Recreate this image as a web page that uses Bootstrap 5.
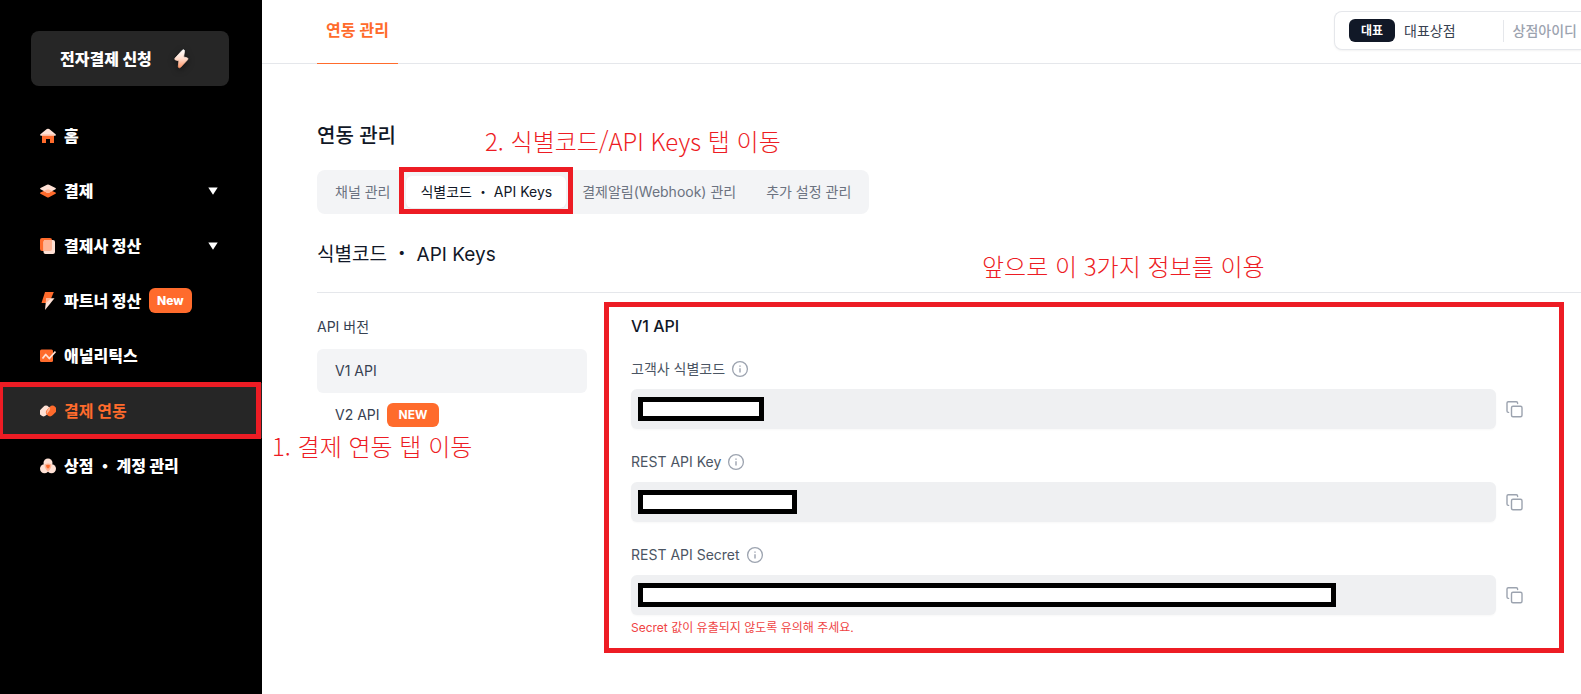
<!DOCTYPE html>
<html lang="ko">
<head>
<meta charset="utf-8">
<meta name="viewport" content="width=device-width, initial-scale=1">
<title>연동 관리</title>
<link href="https://cdn.jsdelivr.net/npm/bootstrap@5.3.0/dist/css/bootstrap.min.css" rel="stylesheet">
<style>
  :root { --brand: #ff6b2c; --ink: #111827; --note: #ed1c24; }
  body { font-family: Inter, "Noto Sans CJK KR", sans-serif; font-size: 14px; line-height: 20px; color: var(--ink); background: #fff; }
  a { text-decoration: none; }
  svg { display: block; flex-shrink: 0; }

  .side { width: 262px; background: #000; z-index: 2; }
  .apply-btn { height: 55px; margin: 31px 33px 22px 31px; padding: 0 38px 0 29px; background: #262626; color: #fff; border: 0; border-radius: 8px; font-size: 16px; font-weight: 800; }
  .side-link { height: 55px; padding: 0 44px 0 40px; gap: 8px; color: #fff; font-size: 16px; font-weight: 800; white-space: nowrap; }
  .side-link.current { background: #262626; color: var(--brand); font-weight: 700; }
  .new-tag { background: var(--brand); color: #fff; border-radius: 6px; font-size: 12px; font-weight: 800; height: 25px; padding: 0 8px; }

  .topbar { height: 64px; border-bottom: 1px solid #e5e7eb; }
  .top-tab { margin-left: 55px; padding: 0 9px 4px; height: 64px; color: var(--brand); font-size: 16px; font-weight: 600; border-bottom: 1px solid var(--brand); }
  .store { width: 247px; height: 39px; margin-top: 11px; padding: 0 0 0 14px; gap: 9px; background: #fff; border: 1px solid #e5e7eb; border-right: 0; border-radius: 8px 0 0 8px; box-shadow: 0 1px 2px #0000000d; white-space: nowrap; color: #374151; }
  .store-tag { width: 46px; height: 23px; background: var(--ink); color: #fff; border-radius: 6px; font-size: 12px; font-weight: 700; }
  .store-id { height: 22px; margin-left: auto; padding: 0 4px 0 9px; border-left: 1px solid #e5e7eb; color: #9ca3af; font-weight: 500; }

  .page-body { padding: 57px 0 0 55px; }
  .page-title { font-size: 20px; line-height: 30px; font-weight: 500; margin-bottom: 19px; }
  .tab-strip { height: 44px; padding: 4px; gap: 2px; border-radius: 8px; background: #f3f4f6; white-space: nowrap; }
  .tab-strip a { height: 32px; padding: 0 14px; color: #6b7280; border-radius: 6px; }
  .tab-strip a.current { background: #fff; color: var(--ink); box-shadow: 0 1px 2px #0000000d; }
  .section-title { font-size: 19px; line-height: 28px; font-weight: 400; padding: 27px 0 23px; margin: 0; border-bottom: 1px solid #e5e7eb; }

  .versions { width: 270px; padding-top: 24px; color: #374151; }
  .versions h3 { font-size: 14px; line-height: 20px; font-weight: 400; margin-bottom: 12px; }
  .versions a { height: 44px; padding: 0 18px; gap: 7px; color: #374151; border-radius: 6px; }
  .versions a.current { background: #f3f4f6; }
  .versions .new-tag { height: 24px; padding: 0 12px; font-weight: 700; }

  .keys { margin: 9px 17px 0 17px; padding: 9px 35px 10px 22px; border: 5px solid var(--note); }
  .keys h3 { font-size: 16px; line-height: 20px; font-weight: 500; margin-bottom: 23px; }
  .key-label { height: 20px; gap: 6px; color: #4b5563; margin-bottom: 10px; }
  .key-row { gap: 8px; margin-bottom: 23px; }
  .key-row.last { margin-bottom: 3px; }
  .key-input { height: 40px; background: #eff0f2; border: 0; border-radius: 6px; box-shadow: 0 1px 2px #00000008; }
  .copy-btn { width: 20px; height: 20px; padding: 0; border: 0; background: none; color: #9ca3af; }
  .warn { font-size: 12px; line-height: 20px; color: #ef4444; margin: 0; }

  .mask { position: absolute; left: 7px; top: 8px; height: 24px; background: #fff; border: 5px solid #000; }
  .frame { position: absolute; border: 5px solid var(--note); pointer-events: none; }
  .frame-side { inset: -1px 1px -1px -2px; }
  .frame-tab { inset: -9px -7px -6px; }
  .callout-text { position: absolute; font-family: "Noto Sans CJK KR", sans-serif; font-size: 24px; line-height: 28px; font-weight: 300; color: var(--note); white-space: nowrap; pointer-events: none; }
  .step-one { left: 272px; top: 49px; }
  .step-two { left: 168px; top: 6px; }
  .step-three { left: 665px; top: 38px; }
</style>
</head>
<body>
<svg width="0" height="0" class="position-absolute" aria-hidden="true">
  <defs>
    <symbol id="i-info" viewBox="0 0 18 18"><g fill="none" stroke="#9ca3af"><circle cx="9" cy="9" r="7.4" stroke-width="1.3"/><path d="M9 8.2v4.2" stroke-width="1.4"/><path d="M9 5.4v1.3" stroke-width="1.4"/></g></symbol>
    <symbol id="i-copy" viewBox="0 0 20 20"><g fill="none" stroke="currentColor" stroke-width="1.4" stroke-linejoin="round" stroke-linecap="round"><rect x="7.5" y="7.2" width="10.500" height="10.500" rx="1.5"/><path d="M4.600 13.400H4.300a1.300 1.300 0 0 1-1.300-1.300V4.100a1.300 1.300 0 0 1 1.300-1.300h8a1.300 1.300 0 0 1 1.300 1.300v.4"/></g></symbol>
    <linearGradient id="bolt-fill" x1="0" y1="0" x2="0" y2="1"><stop offset="0" stop-color="#fff"/><stop offset=".5" stop-color="#ffdccc"/><stop offset="1" stop-color="#ff9466"/></linearGradient>
  </defs>
</svg>
<div class="d-flex min-vh-100">
  <aside class="side flex-shrink-0 d-flex flex-column position-relative">
    <button type="button" class="apply-btn d-flex align-items-center justify-content-between">전자결제 신청
      <svg width="20" height="24" viewBox="0 0 20 24" style="filter:drop-shadow(0 2px 3px #0008)"><path fill="url(#bolt-fill)" stroke="url(#bolt-fill)" stroke-width=".8" d="M11.3 3.3 4.2 11c-.8.9-.5 1.7.5 2l3.2.8-.6 5.5c-.1 1.6 1.300 2 2.500.8l6.600-7.200c.9-1 .6-1.800-.5-2.100l-3.300-.9.9-5.600c.2-1.700-1.200-2-2.200-1z"/></svg>
    </button>
    <nav class="nav flex-column flex-nowrap">
      <a href="#" class="side-link d-flex align-items-center">
        <svg width="16" height="16" viewBox="0 0 16 16"><path fill="#ff6b2c" d="M2 7h12v8h-4v-4H6v4H2z"/><path fill="#ffe1d5" d="M6.800 1.100 Q8 .2 9.200 1.100L15.600 6.300q.8 1.200-.6 1.500H1Q-.3 7.500.4 6.300z"/><path fill="#ffb596" d="M2 6.500h12v1.300H2z"/></svg>홈</a>
      <a href="#" class="side-link d-flex align-items-center">
        <svg width="16" height="16" viewBox="0 0 16 16"><path fill="#ff6b2c" d="m.5 9.600 6.500-3q1-.4 2 0l6.500 3q.8.600 0 1.200L9 14.200q-1 .5-2 0L.5 10.800q-.8-.6 0-1.200z"/><path fill="#ffe1d5" d="M.5 5 7 1.700q1-.4 2 0L15.500 5q.8.600 0 1.200L9 9.700q-1 .5-2 0L.5 6.200q-.8-.6 0-1.200z"/><path fill="#ffb596" d="m3.800 8 3.200-1.400q1-.4 2 0L12.200 8 9 9.700q-1 .5-2 0z"/></svg>결제
        <svg class="ms-auto" width="10" height="8" viewBox="0 0 10 8"><path fill="#fff" d="M.3.500h9.400L5 7.800z"/></svg></a>
      <a href="#" class="side-link d-flex align-items-center">
        <svg width="16" height="16" viewBox="0 0 16 16"><rect width="12" height="13" rx="2" fill="#ff6b2c"/><rect x="3.500" y="2" width="11.500" height="14" rx="2" fill="#ffe1d5"/><path fill="#ffb596" d="M5.500 2H12v9q0 2-2 2H3.500V4q0-2 2-2z"/></svg>결제사 정산
        <svg class="ms-auto" width="10" height="8" viewBox="0 0 10 8"><path fill="#fff" d="M.3.500h9.400L5 7.800z"/></svg></a>
      <a href="#" class="side-link d-flex align-items-center">
        <svg width="16" height="18" viewBox="0 0 16 18"><path fill="#ff6b2c" d="M5 0h8.800l-2.600 6.300L6 11H1.500z"/><path fill="#ffe1d5" d="M6.200 6.300h8.300L5 18z"/><path fill="#ffb596" d="M6.200 6.300h5L6 11z"/></svg>파트너 정산<span class="new-tag d-flex align-items-center">New</span></a>
      <a href="#" class="side-link d-flex align-items-center">
        <svg width="16" height="16" viewBox="0 0 16 16"><rect y="1.500" width="13" height="12.500" rx="1.500" fill="#ff6b2c"/><path fill="none" stroke="#ffe1d5" stroke-width="1.800" stroke-linejoin="round" d="m2.500 10.500 3.200-4 3.600 4L15.500 3.500"/></svg>애널리틱스</a>
      <div class="position-relative">
        <a href="#" class="side-link current d-flex align-items-center" aria-current="page">
          <svg width="16" height="16" viewBox="0 0 16 16"><rect x="-1" y="4" width="11.500" height="8" rx="4" fill="#ffe1d5" transform="rotate(-45 4.750 8)"/><rect x="5.500" y="4" width="11.500" height="8" rx="4" fill="#ff6b2c" transform="rotate(-45 11.250 8)"/><path fill="#ffb596" d="M9.700 4q1.500 2.300-1.700 5.600L6.900 11.200Q5.800 9 8 6z"/></svg>결제 연동</a>
        <div class="frame frame-side"></div>
        <div class="callout-text step-one">1. 결제 연동 탭 이동</div>
      </div>
      <a href="#" class="side-link d-flex align-items-center">
        <svg width="16" height="16" viewBox="0 0 16 16"><circle cx="8" cy="5" r="4.500" fill="#ffe1d5"/><circle cx="4.500" cy="10.700" r="4.500" fill="#ffe1d5"/><circle cx="11.500" cy="10.700" r="4.500" fill="#ffe1d5"/><path fill="#ffb596" d="M4.500 6.500q3.500-2 7 0-.2 4.500-3.500 7-3.300-2.500-3.500-7z"/><path fill="#ff6b2c" d="M6 7.300q2-1 4 0 .1 2-2 3.500-2.100-1.500-2-3.500z"/></svg><span>상점 ・ 계정 관리</span></a>
    </nav>
  </aside>

  <main class="flex-grow-1 overflow-hidden">
    <header class="topbar d-flex">
      <a href="#" class="top-tab d-flex align-items-center flex-shrink-0">연동 관리</a>
      <button type="button" class="store d-flex align-items-center ms-auto">
        <span class="store-tag d-flex align-items-center justify-content-center">대표</span>
        <span>대표상점</span>
        <span class="store-id d-flex align-items-center">상점아이디</span>
      </button>
    </header>

    <div class="page-body">
      <div class="position-relative">
        <h1 class="page-title">연동 관리</h1>
        <div class="callout-text step-two">2. 식별코드/API Keys 탭 이동</div>
      </div>
      <nav class="tab-strip d-inline-flex align-items-center">
        <a href="#" class="d-flex align-items-center">채널 관리</a>
        <div class="position-relative">
          <a href="#" class="current d-flex align-items-center" aria-current="page">식별코드 ・ API Keys</a>
          <div class="frame frame-tab"></div>
        </div>
        <a href="#" class="d-flex align-items-center">결제알림(Webhook) 관리</a>
        <a href="#" class="d-flex align-items-center">추가 설정 관리</a>
      </nav>
      <div class="position-relative">
        <h2 class="section-title">식별코드 ・ API Keys</h2>
        <div class="callout-text step-three">앞으로 이 3가지 정보를 이용</div>
      </div>

      <div class="d-flex">
        <div class="versions flex-shrink-0">
          <h3>API 버전</h3>
          <nav>
            <a href="#" class="current d-flex align-items-center">V1 API</a>
            <a href="#" class="d-flex align-items-center">V2 API <span class="new-tag d-flex align-items-center">NEW</span></a>
          </nav>
        </div>

        <section class="keys flex-grow-1">
          <h3>V1 API</h3>
          <label class="key-label d-flex align-items-center" for="merchant-code">고객사 식별코드 <svg width="18" height="18"><use href="#i-info"/></svg></label>
          <div class="key-row d-flex align-items-center">
            <div class="position-relative flex-grow-1"><input id="merchant-code" class="key-input form-control" readonly><div class="mask" style="width:126px"></div></div>
            <button type="button" class="copy-btn" aria-label="복사"><svg width="20" height="20"><use href="#i-copy"/></svg></button>
          </div>
          <label class="key-label d-flex align-items-center" for="rest-key">REST API Key <svg width="18" height="18"><use href="#i-info"/></svg></label>
          <div class="key-row d-flex align-items-center">
            <div class="position-relative flex-grow-1"><input id="rest-key" class="key-input form-control" readonly><div class="mask" style="width:159px"></div></div>
            <button type="button" class="copy-btn" aria-label="복사"><svg width="20" height="20"><use href="#i-copy"/></svg></button>
          </div>
          <label class="key-label d-flex align-items-center" for="rest-secret">REST API Secret <svg width="18" height="18"><use href="#i-info"/></svg></label>
          <div class="key-row last d-flex align-items-center">
            <div class="position-relative flex-grow-1"><input id="rest-secret" class="key-input form-control" readonly><div class="mask" style="width:698px"></div></div>
            <button type="button" class="copy-btn" aria-label="복사"><svg width="20" height="20"><use href="#i-copy"/></svg></button>
          </div>
          <p class="warn">Secret 값이 유출되지 않도록 유의해 주세요.</p>
        </section>
      </div>
    </div>
  </main>
</div>
<script src="https://cdn.jsdelivr.net/npm/bootstrap@5.3.0/dist/js/bootstrap.bundle.min.js"></script>
</body>
</html>
